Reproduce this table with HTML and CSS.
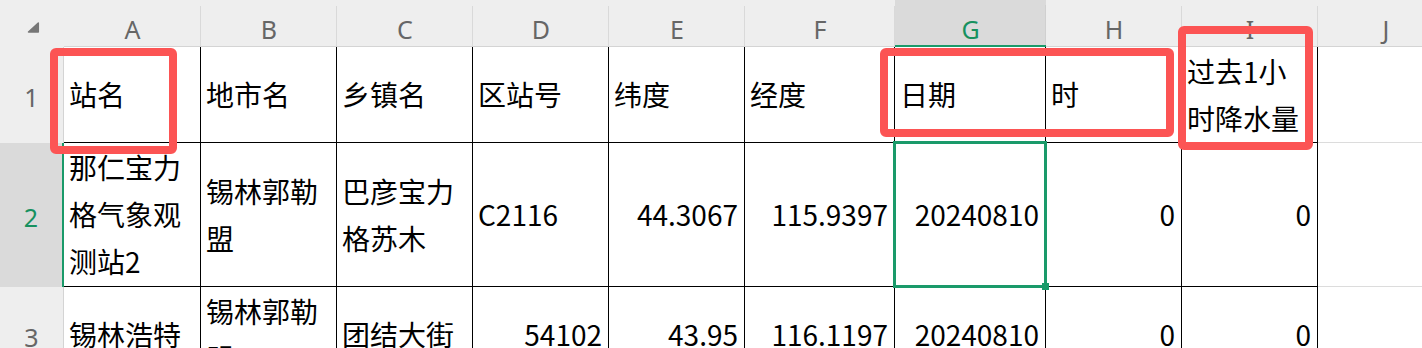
FILE: index.html
```html
<!DOCTYPE html>
<html lang="zh-CN">
<head>
<meta charset="utf-8">
<title>Sheet</title>
<link rel="stylesheet" href="styles.css">
</head>
<body>
<div class="sheet">
  <div class="corner"><svg class="tri" width="14" height="13" viewBox="0 0 14 13"><path d="M1.5 11 L11.3 2 L11.3 11 Z" fill="#777" stroke="#777" stroke-width="1.5" stroke-linejoin="round"/></svg></div>
  <div class="ch">A</div>
  <div class="ch">B</div>
  <div class="ch">C</div>
  <div class="ch">D</div>
  <div class="ch">E</div>
  <div class="ch">F</div>
  <div class="ch sel">G</div>
  <div class="ch">H</div>
  <div class="ch">I</div>
  <div class="ch">J</div>

  <div class="rh">1</div>
  <div class="c">站名</div>
  <div class="c">地市名</div>
  <div class="c">乡镇名</div>
  <div class="c">区站号</div>
  <div class="c">纬度</div>
  <div class="c">经度</div>
  <div class="c">日期</div>
  <div class="c">时</div>
  <div class="c">过去1小时降水量</div>
  <div class="c e"></div>

  <div class="rh sel">2</div>
  <div class="c">那仁宝力格气象观测站2</div>
  <div class="c">锡林郭勒盟</div>
  <div class="c">巴彦宝力格苏木</div>
  <div class="c">C2116</div>
  <div class="c r">44.3067</div>
  <div class="c r">115.9397</div>
  <div class="c r">20240810</div>
  <div class="c r">0</div>
  <div class="c r">0</div>
  <div class="c e"></div>

  <div class="rh">3</div>
  <div class="c">锡林浩特</div>
  <div class="c">锡林郭勒盟</div>
  <div class="c">团结大街</div>
  <div class="c r">54102</div>
  <div class="c r">43.95</div>
  <div class="c r">116.1197</div>
  <div class="c r">20240810</div>
  <div class="c r">0</div>
  <div class="c r">0</div>
  <div class="c e"></div>

  <div class="selection"></div>
  <div class="handle"></div>

  <div class="mark m-a"></div>
  <div class="mark m-gh"></div>
  <div class="mark m-i"></div>
</div>
</body>
</html>
```
FILE: styles.css
```css
* {
  box-sizing: border-box;
  margin: 0;
  padding: 0;
}

html, body {
  width: 1422px;
  height: 348px;
  overflow: hidden;
  background: #ffffff;
}

body {
  font-family: "Noto Sans CJK SC", "Noto Sans", sans-serif;
  color: #000;
}

.sheet {
  position: relative;
  display: grid;
  grid-template-columns: 64px 137px 136px 136px 136px 136px 150px 151px 136px 136px 136px;
  grid-template-rows: 47px 96px 144px 96px;
  width: max-content;
}

.corner {
  background: #eeeeee;
  padding: 21px 0 0 27px;
}

.tri {
  display: block;
}

.ch {
  background: linear-gradient(#d9d9d9, #d9d9d9) right bottom / 1px 40px no-repeat, #eeeeee;
  border-bottom: 1px solid #d4d4d4;
  display: flex;
  justify-content: center;
  align-items: center;
  padding-top: 12px;
  font-family: "Noto Sans", "Open Sans", sans-serif;
  font-size: 25px;
  color: #666666;
}

.ch.sel {
  background: linear-gradient(#d0d0d0, #d0d0d0) right bottom / 1px 40px no-repeat, #dadada;
  border-bottom: 2px solid #1a9a6a;
  color: #17915f;
}

.rh {
  background: #eeeeee;
  border-right: 1px solid #d4d4d4;
  display: flex;
  justify-content: center;
  align-items: center;
  padding-top: 4px;
  font-family: "Noto Sans", "Open Sans", sans-serif;
  font-size: 25px;
  color: #666666;
}

.rh.sel {
  background: #dadada;
  border-right: 2px solid #1a9a6a;
  color: #17915f;
}

.c {
  border-right: 1px solid #000;
  border-bottom: 1px solid #000;
  display: flex;
  align-items: center;
  padding: 0 6px 0 5px;
  font-size: 28px;
  line-height: 47px;
  overflow: visible;
  white-space: normal;
}

.c.r {
  justify-content: flex-end;
  text-align: right;
}

.c.e {
  border-color: #dcdcdc;
}

.selection {
  position: absolute;
  left: 893px;
  top: 141px;
  width: 154px;
  height: 147px;
  border: 3px solid #1a9a6a;
}

.handle {
  position: absolute;
  left: 1042px;
  top: 283px;
  width: 7px;
  height: 7px;
  background: #1a9a6a;
}

.mark {
  position: absolute;
  border: 8px solid #fc5454;
  border-radius: 6px;
}

.m-a {
  left: 50px;
  top: 48px;
  width: 127px;
  height: 106px;
}

.m-gh {
  left: 880px;
  top: 48px;
  width: 294px;
  height: 89px;
}

.m-i {
  left: 1178px;
  top: 26px;
  width: 135px;
  height: 124px;
}
```
